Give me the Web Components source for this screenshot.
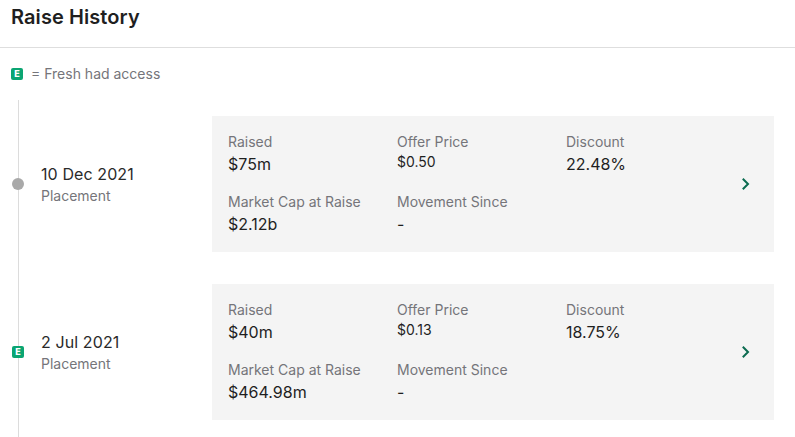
<!DOCTYPE html>
<html>
<head>
<meta charset="utf-8">
<title>Raise History</title>
<style>
  html, body { margin: 0; height: 437px; overflow: hidden; background: #fff; }
  body { font-family: Inter, "Liberation Sans", sans-serif; color: #1f1f1f; }
</style>
</head>
<body>
<raise-history>
  <raise-row date="10 Dec 2021" type="Placement" marker="dot" href="#">
    <raise-stat label="Raised" value="$75m"></raise-stat>
    <raise-stat label="Offer Price" value="$0.50" small></raise-stat>
    <raise-stat label="Discount" value="22.48%"></raise-stat>
    <raise-stat label="Market Cap at Raise" value="$2.12b"></raise-stat>
    <raise-stat label="Movement Since" value="-"></raise-stat>
  </raise-row>
  <raise-row date="2 Jul 2021" type="Placement" marker="badge" href="#">
    <raise-stat label="Raised" value="$40m"></raise-stat>
    <raise-stat label="Offer Price" value="$0.13" small></raise-stat>
    <raise-stat label="Discount" value="18.75%"></raise-stat>
    <raise-stat label="Market Cap at Raise" value="$464.98m"></raise-stat>
    <raise-stat label="Movement Since" value="-"></raise-stat>
  </raise-row>
</raise-history>

<script>
// small green "E" square
class FreshBadge extends HTMLElement {
  constructor() {
    super();
    const root = this.attachShadow({ mode: 'open' });
    root.innerHTML = `
      <style>
        :host {
          display: inline-flex;
          align-items: center;
          justify-content: center;
          width: 12px;
          height: 12px;
          border-radius: 2px;
          background: #0ba572;
          color: #fff;
          font-size: 9px;
          font-weight: 800;
          line-height: 12px;
        }
      </style>
      E
    `;
  }
}
customElements.define('fresh-badge', FreshBadge);

class RaiseHistory extends HTMLElement {
  constructor() {
    super();
    const root = this.attachShadow({ mode: 'open' });
    root.innerHTML = `
      <style>
        :host {
          display: flex;
          flex-direction: column;
          height: 437px;
        }
        header {
          height: 48px;
          box-sizing: border-box;
          padding: 4px 11px 0;
          border-bottom: 1px solid #dedede;
        }
        h2 {
          margin: 0;
          font-size: 20px;
          line-height: 26px;
          font-weight: 600;
          letter-spacing: .08px;
          color: #1f1f1f;
        }
        .legend {
          display: flex;
          align-items: center;
          gap: 8px;
          height: 20px;
          padding: 16px 0 0 11px;
          font-size: 14px;
          color: #75757a;
        }
        .legend span { padding-bottom: 1px; }
        .list {
          flex: 1;
          display: flex;
          flex-direction: column;
          gap: 32px;
          margin: 16px 21px 0 18px;
          padding-top: 16px;
          border-left: 1px solid #dcdcdc;
        }
      </style>
      <header><h2>Raise History</h2></header>
      <div class="legend"><fresh-badge></fresh-badge><span>= Fresh had access</span></div>
      <div class="list"><slot></slot></div>
    `;
  }
}
customElements.define('raise-history', RaiseHistory);

class RaiseRow extends HTMLElement {
  constructor() {
    super();
    const root = this.attachShadow({ mode: 'open' });
    const marker = this.getAttribute('marker') === 'badge'
      ? '<fresh-badge class="marker"></fresh-badge>'
      : '<span class="marker dot"></span>';
    root.innerHTML = `
      <style>
        :host {
          display: flex;
          position: relative;
          align-items: center;
          height: 136px;
        }
        .marker {
          position: absolute;
          left: -7px;
          top: 62px;
        }
        .dot {
          width: 12px;
          height: 12px;
          border-radius: 50%;
          background: #a9a9a9;
        }
        .when {
          width: 193px;
          box-sizing: border-box;
          padding-left: 22px;
        }
        .date {
          font-size: 16px;
          line-height: 24px;
          letter-spacing: .1px;
          color: #2a2a2a;
        }
        .type {
          font-size: 14px;
          line-height: 20px;
          color: #75757a;
        }
        .card {
          flex: 1;
          height: 100%;
          box-sizing: border-box;
          display: flex;
          align-items: center;
          padding: 16px 22px 16px 16px;
          background: #f4f4f4;
        }
        .stats {
          flex: 1;
          display: grid;
          grid-template-columns: repeat(3, 169px);
          row-gap: 16px;
          align-self: flex-start;
        }
        svg { display: block; }
      </style>
      ${marker}
      <div class="when">
        <div class="date">${this.getAttribute('date')}</div>
        <div class="type">${this.getAttribute('type')}</div>
      </div>
      <div class="card">
        <div class="stats"><slot></slot></div>
        <svg width="12" height="14" viewBox="0 0 12 14" fill="none">
          <path d="M2.8 1.8 8 7l-5.2 5.2" stroke="#0b6b50" stroke-width="2"/>
        </svg>
      </div>
    `;
  }
}
customElements.define('raise-row', RaiseRow);

class RaiseStat extends HTMLElement {
  constructor() {
    super();
    const root = this.attachShadow({ mode: 'open' });
    root.innerHTML = `
      <style>
        :host { display: block; }
        .label {
          font-size: 14px;
          line-height: 20px;
          color: #75757a;
        }
        .value {
          font-size: 16px;
          line-height: 24px;
          color: #1f1f1f;
        }
        :host([small]) .value {
          font-size: 14px;
          line-height: 20px;
        }
      </style>
      <div class="label">${this.getAttribute('label')}</div>
      <div class="value">${this.getAttribute('value')}</div>
    `;
  }
}
customElements.define('raise-stat', RaiseStat);
</script>
</body>
</html>
